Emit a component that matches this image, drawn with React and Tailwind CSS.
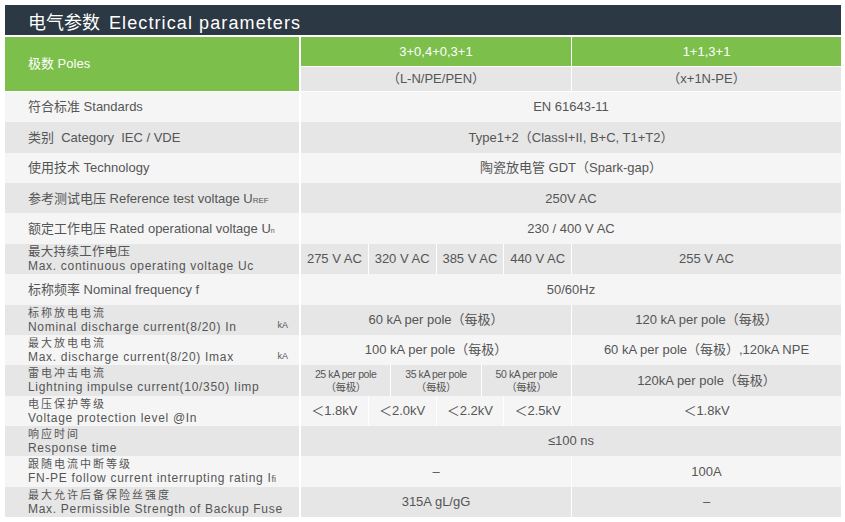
import React from 'react';

const LIGHT = 'bg-[#f5f5f5]';
const GRAY = 'bg-[#e6e6e6]';

const font = { fontFamily: '"Liberation Sans", Arial, "Noto Sans CJK SC", sans-serif' };

// one-line label, e.g. 符合标准 Standards
function Label1({ children }) {
  return <span className="text-[13px] text-[#555]">{children}</span>;
}

// two-line label: chinese on top, english below
function Label2({ cn, en, wideCn = true, unit }) {
  return (
    <div className="flex w-full items-end justify-between pr-[11px]">
      <div className="flex flex-col leading-[14px] text-[#555]">
        <span className={wideCn ? 'text-[11px] tracking-[2px]' : 'text-[12.5px] tracking-[0.3px]'}>{cn}</span>
        <span className="text-[12px] tracking-[0.7px]">{en}</span>
      </div>
      {unit && <span className="mb-[1px] text-[9px] text-[#555]">{unit}</span>}
    </div>
  );
}

function Row({ bg, label, children }) {
  return (
    <div className="flex h-[30.36px] gap-[2px]">
      <div className={`flex w-[294px] shrink-0 items-center pl-[23px] ${bg}`}>{label}</div>
      <div className="flex flex-1 gap-[1px]">{children}</div>
    </div>
  );
}

function Cell({ bg, className = '', children }) {
  return (
    <div className={`flex items-center justify-center text-[13px] text-[#555] ${bg} ${className}`}>
      {children}
    </div>
  );
}

function Split({ bg, left, right }) {
  return (
    <>
      <Cell bg={bg} className="w-[270px] shrink-0">{left}</Cell>
      <Cell bg={bg} className="flex-1">{right}</Cell>
    </>
  );
}

function Span({ bg, children }) {
  return <Cell bg={bg} className="flex-1">{children}</Cell>;
}

function Quad({ bg, items, right }) {
  return (
    <>
      <div className="grid w-[270px] shrink-0 grid-cols-4 gap-[1px]">
        {items.map((t) => (
          <Cell key={t} bg={bg}>{t}</Cell>
        ))}
      </div>
      <Cell bg={bg} className="flex-1">{right}</Cell>
    </>
  );
}

export default function App() {
  return (
    <div className="min-h-[522px] w-[845px] bg-white px-[5px] pt-[5px]" style={font}>
      <div className="w-[836px]">
        {/* title bar */}
        <div className="flex h-[30px] items-center gap-[9px] bg-[#2c3843] pl-[23px] pt-[6px] text-white">
          <span className="text-[18px]">电气参数</span>
          <span className="text-[18px] tracking-[1.1px]">Electrical parameters</span>
        </div>

        {/* poles */}
        <div className="mt-[2px] flex h-[54px] gap-[2px]">
          <div className="flex w-[294px] shrink-0 items-center bg-[#7cbf4b] pl-[23px] text-[13px] text-white">
            极数 Poles
          </div>
          <div className="flex flex-1 gap-[1px]">
            <div className="flex w-[270px] shrink-0 flex-col gap-[1px]">
              <div className="flex h-[29px] items-center justify-center bg-[#7cbf4b] text-[13px] text-white">3+0,4+0,3+1</div>
              <div className="flex flex-1 items-center justify-center bg-[#e6e6e6] text-[13px] text-[#555]">（L-N/PE/PEN）</div>
            </div>
            <div className="flex flex-1 flex-col gap-[1px]">
              <div className="flex h-[29px] items-center justify-center bg-[#7cbf4b] text-[13px] text-white">1+1,3+1</div>
              <div className="flex flex-1 items-center justify-center bg-[#e6e6e6] text-[13px] text-[#555]">（x+1N-PE）</div>
            </div>
          </div>
        </div>

        <div className="mt-[1px]">
          <Row bg={LIGHT} label={<Label1>符合标准 Standards</Label1>}>
            <Span bg={LIGHT}>EN 61643-11</Span>
          </Row>
          <Row bg={GRAY} label={<Label1>类别 &nbsp;Category &nbsp;IEC / VDE</Label1>}>
            <Span bg={GRAY}>Type1+2（ClassI+II, B+C, T1+T2）</Span>
          </Row>
          <Row bg={LIGHT} label={<Label1>使用技术 Technology</Label1>}>
            <Span bg={LIGHT}>陶瓷放电管 GDT（Spark-gap）</Span>
          </Row>
          <Row
            bg={GRAY}
            label={
              <Label1>
                参考测试电压 Reference test voltage U<span className="text-[8px]">REF</span>
              </Label1>
            }
          >
            <Span bg={GRAY}>250V AC</Span>
          </Row>
          <Row
            bg={LIGHT}
            label={
              <Label1>
                额定工作电压 Rated operational voltage U<span className="text-[7px]">n</span>
              </Label1>
            }
          >
            <Span bg={LIGHT}>230 / 400 V AC</Span>
          </Row>
          <Row bg={GRAY} label={<Label2 cn="最大持续工作电压" en="Max. continuous operating voltage Uc" wideCn={false} />}>
            <Quad bg={GRAY} items={['275 V AC', '320 V AC', '385 V AC', '440 V AC']} right="255 V AC" />
          </Row>
          <Row bg={LIGHT} label={<Label1>标称频率 Nominal frequency f</Label1>}>
            <Span bg={LIGHT}>50/60Hz</Span>
          </Row>
          <Row bg={GRAY} label={<Label2 cn="标称放电电流" en="Nominal discharge current(8/20) In" unit="kA" />}>
            <Split bg={GRAY} left="60 kA per pole（每极）" right="120 kA per pole（每极）" />
          </Row>
          <Row bg={LIGHT} label={<Label2 cn="最大放电电流" en="Max. discharge current(8/20) Imax" unit="kA" />}>
            <Split bg={LIGHT} left="100 kA per pole（每极）" right="60 kA per pole（每极）,120kA NPE" />
          </Row>
          <Row bg={GRAY} label={<Label2 cn="雷电冲击电流" en="Lightning impulse current(10/350) Iimp" />}>
            <div className="grid w-[270px] shrink-0 grid-cols-3 gap-[1px]">
              {['25 kA per pole', '35 kA per pole', '50 kA per pole'].map((t) => (
                <div key={t} className={`flex flex-col items-center justify-center pt-[2px] text-[10.5px] leading-[13px] tracking-[-0.4px] text-[#555] ${GRAY}`}>
                  <span>{t}</span>
                  <span>（每极）</span>
                </div>
              ))}
            </div>
            <Cell bg={GRAY} className="flex-1">120kA per pole（每极）</Cell>
          </Row>
          <Row bg={LIGHT} label={<Label2 cn="电压保护等级" en="Voltage protection level @In" />}>
            <Quad bg={LIGHT} items={['＜1.8kV', '＜2.0kV', '＜2.2kV', '＜2.5kV']} right="＜1.8kV" />
          </Row>
          <Row bg={GRAY} label={<Label2 cn="响应时间" en="Response time" />}>
            <Span bg={GRAY}>≤100 ns</Span>
          </Row>
          <Row
            bg={LIGHT}
            label={
              <Label2
                cn="跟随电流中断等级"
                en={
                  <>
                    FN-PE follow current interrupting rating I<span className="text-[9px] tracking-normal">fi</span>
                  </>
                }
              />
            }
          >
            <Split bg={LIGHT} left="–" right="100A" />
          </Row>
          <Row bg={GRAY} label={<Label2 cn="最大允许后备保险丝强度" en="Max. Permissible Strength of Backup Fuse" />}>
            <Split bg={GRAY} left="315A gL/gG" right="–" />
          </Row>
        </div>
      </div>
    </div>
  );
}
